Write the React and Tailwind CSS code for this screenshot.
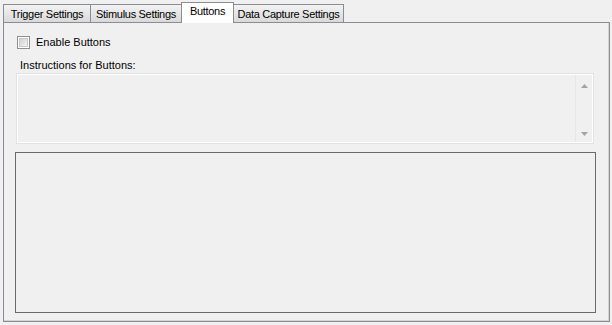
import React from 'react';

const font = { fontFamily: '"Liberation Sans", Arial, sans-serif' };

const tabs = [
  { label: 'Trigger Settings', w: 'w-[88px]' },
  { label: 'Stimulus Settings', w: 'w-[92px]' },
  { label: 'Buttons', w: 'w-[53px]', active: true },
  { label: 'Data Capture Settings', w: 'w-[111px]' },
];

const Tab = ({ label, w, active }) => {
  if (active) {
    return (
      <div
        className={`${w} -ml-px relative z-10 -mb-px h-[21px] border border-b-0 border-[#898c95] bg-white pt-[2px] text-center text-[11px] leading-[13px] tracking-[-0.3px] text-black`}
      >
        {label}
      </div>
    );
  }
  return (
    <div
      className={`${w} -ml-px first:ml-0 h-[18px] border border-b-0 border-[#898c95] bg-linear-to-b from-[#f3f3f3] to-[#d9d9d9] pt-[3px] text-center text-[11px] leading-[13px] tracking-[-0.3px] text-black whitespace-nowrap`}
    >
      {label}
    </div>
  );
};

const Checkbox = () => (
  <div className="h-[13px] w-[13px] border border-[#8e8f8f] bg-white p-px">
    <div className="h-full w-full border border-[#c8c8c8] bg-linear-to-br from-[#d0d0d0] to-[#f4f4f4]" />
  </div>
);

const Arrow = ({ up }) => (
  <svg width="7" height="4" viewBox="0 0 7 4">
    {up ? (
      <path d="M3.5 0 L7 4 L0 4 Z" fill="#a3a3a3" />
    ) : (
      <path d="M0 0 L7 0 L3.5 4 Z" fill="#a3a3a3" />
    )}
  </svg>
);

export default function App() {
  return (
    <div className="w-[612px] h-[325px] bg-[#f0f0f0] overflow-hidden" style={font}>
      {/* tab strip */}
      <div className="flex items-end h-[22px] pt-[2px] pl-[3px]">
        {tabs.map((t) => (
          <Tab key={t.label} {...t} />
        ))}
      </div>

      {/* tab page */}
      <div className="ml-[3px] w-[607px] h-[300px] border border-[#898c95] shadow-[inset_-1px_-1px_0_#d4d4d4] flex flex-col">
        <div className="mt-[13px] ml-[13px] flex items-center gap-[6px] h-[13px]">
          <Checkbox />
          <span className="text-[11px] leading-[13px] text-black">Enable Buttons</span>
        </div>

        <div className="mt-[10px] ml-[16px] text-[11px] leading-[13px] text-black">
          Instructions for Buttons:
        </div>

        <div className="mt-[2px] ml-[13px] w-[576px] h-[69px] border border-white shadow-[0_0_0_1px_#e2e2e2] flex justify-end">
          <div className="w-[17px] h-full border-l border-[#e6e6e6] flex flex-col items-center justify-between pt-[9px] pb-[6px]">
            <Arrow up />
            <Arrow />
          </div>
        </div>

        <div className="mt-[9px] ml-[11px] w-[581px] h-[161px] border border-[#6a6a6a]" />
      </div>
    </div>
  );
}
